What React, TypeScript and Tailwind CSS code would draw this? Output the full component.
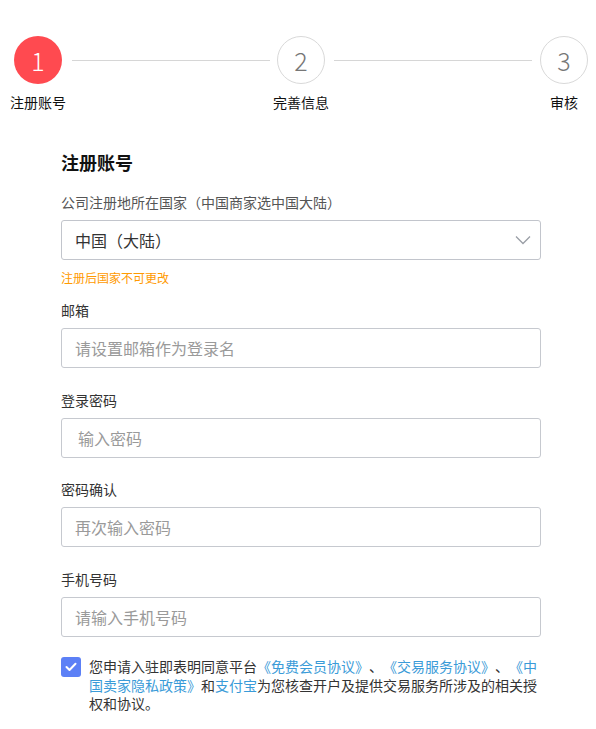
import React from "react";

const font = { fontFamily: '"Noto Sans CJK SC", "Noto Sans", sans-serif' };

function Circle({ n, active }: { n: number; active?: boolean }) {
  return (
    <div
      className={
        "w-[48px] h-[48px] rounded-full flex items-center justify-center text-[25px] font-light leading-none shrink-0 " +
        (active ? "bg-[#ff4a50] text-white" : "border border-[#d9d9d9] text-[#777] bg-white")
      }
    >
      {n}
    </div>
  );
}

function Step({ n, label, active }: { n: number; label: string; active?: boolean }) {
  return (
    <div className="flex flex-col items-center w-[48px] shrink-0">
      <Circle n={n} active={active} />
      <div className="mt-[8px] whitespace-nowrap text-[14px] leading-[20px] text-[#111]">{label}</div>
    </div>
  );
}

function Field({ label, placeholder, pad, mt }: { label: string; placeholder: string; pad: string; mt: string }) {
  return (
    <div className={mt}>
      <div className="text-[14px] leading-[20px] text-[#333]">{label}</div>
      <div className={"mt-[8px] h-[40px] border border-[#c6c9cf] rounded-[3px] flex items-center text-[16px] text-[#9a9a9a] " + pad}>
        {placeholder}
      </div>
    </div>
  );
}

export default function App() {
  return (
    <div className="w-[596px] min-h-[729px] bg-white [text-spacing-trim:space-all]" style={font}>
      {/* stepper */}
      <div className="flex items-start pt-[36px] pl-[14px] pr-[8px]">
        <Step n={1} label="注册账号" active />
        <div className="flex-1 h-px bg-[#d6d6d6] mt-[24px] ml-[10px] mr-[7px]" />
        <Step n={2} label="完善信息" />
        <div className="flex-1 h-px bg-[#d6d6d6] mt-[24px] ml-[9px] mr-[8px]" />
        <Step n={3} label="审核" />
      </div>

      {/* form */}
      <div className="ml-[61px] w-[480px] mt-[38px]">
        <div className="text-[18px] leading-[24px] font-bold text-[#111]">注册账号</div>
        <div className="mt-[18px] text-[14px] leading-[20px] text-[#555]">公司注册地所在国家（中国商家选中国大陆）</div>
        <div className="mt-[8px] h-[40px] border border-[#c2c5cc] rounded-[3px] flex items-center justify-between pl-[13px] pr-[9px]">
          <span className="text-[16px] text-[#333]">中国（大陆）</span>
          <svg width="16" height="10" viewBox="0 0 16 10" fill="none">
            <path d="M1 1.5 L8 8.5 L15 1.5" stroke="#9a9ea6" strokeWidth="1.3" />
          </svg>
        </div>
        <div className="mt-[10px] text-[12px] leading-[16px] text-[#ff9a00]">注册后国家不可更改</div>

        <Field mt="mt-[14px]" label="邮箱" placeholder="请设置邮箱作为登录名" pad="pl-[13px]" />
        <Field mt="mt-[22px]" label="登录密码" placeholder="输入密码" pad="pl-[16px]" />
        <Field mt="mt-[21px]" label="密码确认" placeholder="再次输入密码" pad="pl-[13px]" />
        <Field mt="mt-[22px]" label="手机号码" placeholder="请输入手机号码" pad="pl-[13px]" />

        <div className="mt-[20px] flex items-start">
          <div className="w-[20px] h-[20px] rounded-[3px] bg-[#5c80f6] flex items-center justify-center shrink-0">
            <svg width="12" height="10" viewBox="0 0 12 10" fill="none">
              <path d="M1.5 5 L4.5 8 L10.5 1.8" stroke="white" strokeWidth="2" strokeLinecap="round" strokeLinejoin="round" />
            </svg>
          </div>
          <p className="ml-[8px] text-[14px] leading-[18.5px] text-[#333] w-[452px]">
            您申请入驻即表明同意平台<span className="text-[#3a9bd8]">《免费会员协议》</span>、<span className="text-[#3a9bd8]">《交易服务协议》</span>、<span className="text-[#3a9bd8]">《中国卖家隐私政策》</span>和<span className="text-[#3a9bd8]">支付宝</span>为您核查开户及提供交易服务所涉及的相关授权和协议。
          </p>
        </div>
      </div>
    </div>
  );
}
